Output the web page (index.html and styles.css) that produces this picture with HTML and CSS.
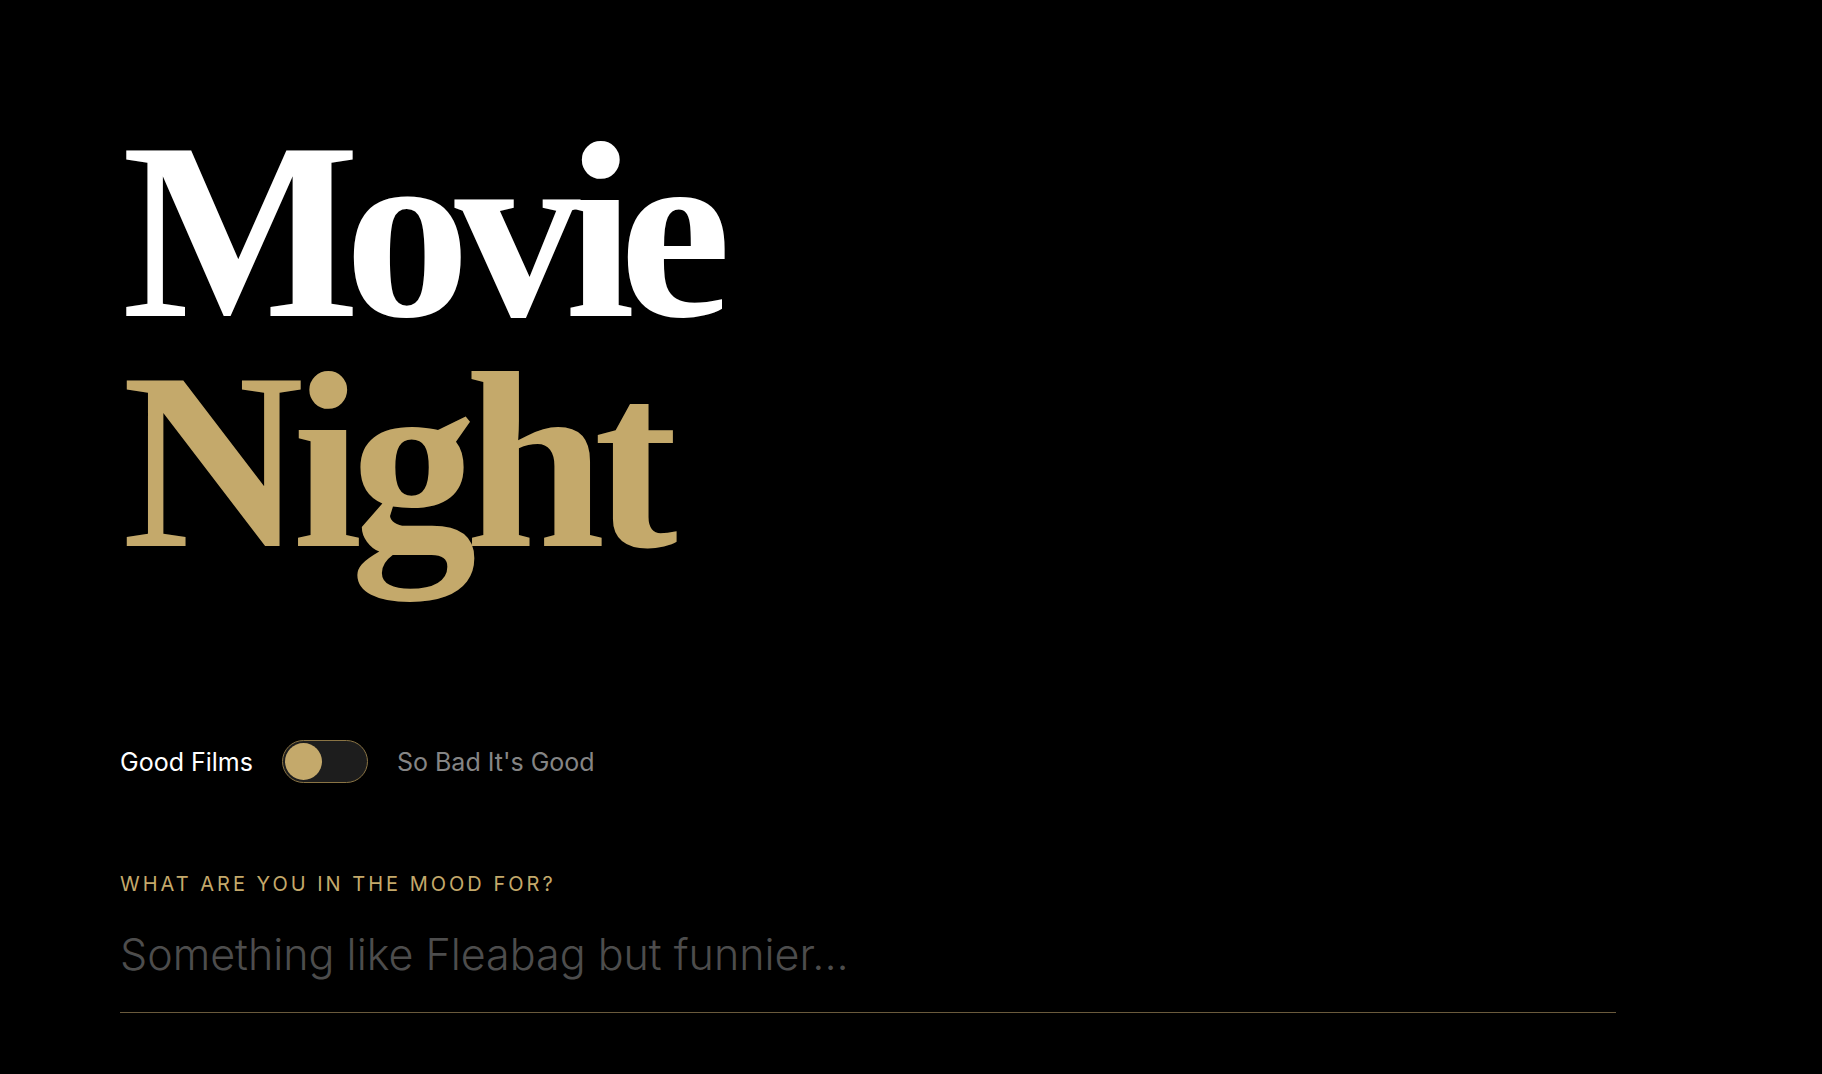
FILE: index.html
```html
<!DOCTYPE html>
<html lang="en">
<head>
<meta charset="utf-8">
<title>Movie Night</title>
<link rel="stylesheet" href="styles.css">
</head>
<body>
<main class="page">
  <h1 class="title">
    <span class="title-line title-white">Movie</span>
    <span class="title-line title-gold">Night</span>
  </h1>

  <div class="mode-row">
    <span class="mode-label mode-active">Good Films</span>
    <button class="toggle" type="button" aria-label="Toggle mode">
      <span class="toggle-knob"></span>
    </button>
    <span class="mode-label mode-inactive">So Bad It's Good</span>
  </div>

  <div class="mood">
    <label class="mood-label" for="mood">What are you in the mood for?</label>
    <input class="mood-input" id="mood" type="text" placeholder="Something like Fleabag but funnier...">
  </div>
</main>
</body>
</html>
```

FILE: styles.css
```css
html, body {
  margin: 0;
  padding: 0;
  background: #000;
}

body {
  font-family: Inter, "Noto Sans", "Liberation Sans", sans-serif;
  color: #fff;
  min-height: 100vh;
}

.page {
  padding: 116px 120px 40px;
  display: flex;
  flex-direction: column;
}

.title {
  margin: 0;
  padding-left: 2px;
  font-family: "Liberation Serif", "DejaVu Serif", serif;
  font-weight: 700;
  font-size: 252px;
  line-height: 230px;
  display: flex;
  flex-direction: column;
}

.title-line {
  display: block;
  height: 230px;
}

.title-white {
  color: #ffffff;
  letter-spacing: -0.062em;
}

.title-gold {
  color: #c4a96b;
  letter-spacing: -0.046em;
}

.mode-row {
  margin-top: 164px;
  display: flex;
  align-items: center;
  gap: 29px;
}

.mode-label {
  font-size: 25px;
  line-height: 1.2;
}

.mode-active {
  color: #ffffff;
}

.mode-inactive {
  color: #858585;
}

.toggle {
  box-sizing: border-box;
  width: 86px;
  height: 43px;
  padding: 0 0 0 2px;
  margin: 0;
  border: 1px solid #8a7444;
  border-radius: 22px;
  background: #1d1d1d;
  display: flex;
  align-items: center;
  cursor: pointer;
}

.toggle-knob {
  width: 37px;
  height: 37px;
  border-radius: 50%;
  background: #c4a96b;
  display: block;
}

.mood {
  margin-top: 89px;
  display: flex;
  flex-direction: column;
  gap: 32px;
  width: 1496px;
}

.mood-label {
  font-size: 20px;
  line-height: 1.2;
  letter-spacing: 0.15em;
  text-transform: uppercase;
  color: #c4a96b;
}

.mood-input {
  box-sizing: border-box;
  width: 100%;
  margin: 0;
  padding: 0 0 32px;
  border: 0;
  border-bottom: 1px solid #6a5a3c;
  background: transparent;
  outline: none;
  font-family: Inter, "Noto Sans", "Liberation Sans", sans-serif;
  font-weight: 300;
  font-size: 43px;
  line-height: normal;
  color: #ffffff;
}

.mood-input::placeholder {
  color: #4d4d4d;
  opacity: 1;
}
```
